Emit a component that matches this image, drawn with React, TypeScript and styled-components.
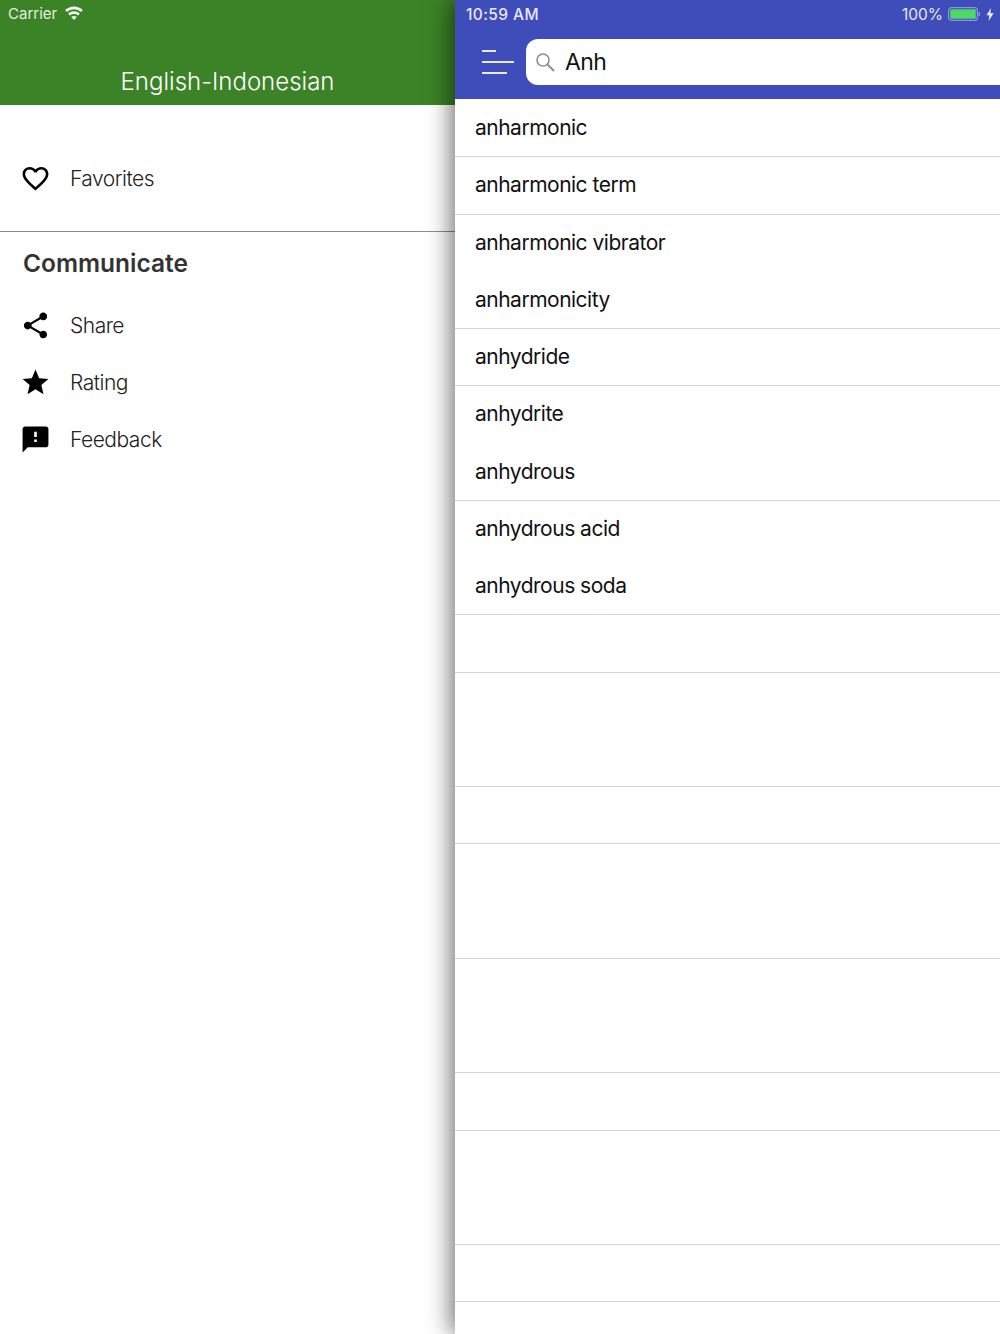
import React from "react"
import styled, { createGlobalStyle } from "styled-components"
import { MdFavoriteBorder, MdFeedback, MdShare, MdStar } from "react-icons/md"

const GlobalStyle = createGlobalStyle`
  html, body {
    margin: 0;
    padding: 0;
    background: #fff;
  }
`

const Screen = styled.div`
  width: 1000px;
  height: 1334px;
  display: flex;
  overflow: hidden;
  font-family: Inter, "Liberation Sans", sans-serif;
`

const Drawer = styled.div`
  width: 455px;
  flex: none;
  display: flex;
  flex-direction: column;
  background: #fff;
`

const DrawerHeader = styled.div`
  height: 105px;
  flex: none;
  background: #3b8326;
  display: flex;
  flex-direction: column;
`

const StatusLeft = styled.div`
  height: 26px;
  padding-left: 8px;
  display: flex;
  align-items: center;
  gap: 8px;
  color: #e4efe0;
  font-size: 15px;
`

const DrawerTitle = styled.div`
  margin-top: 40px;
  text-align: center;
  color: #fff;
  font-size: 24px;
  font-weight: 300;
  line-height: 32px;
`

const FavoritesBlock = styled.div`
  height: 127px;
  flex: none;
  padding-top: 45px;
  box-sizing: border-box;
  border-bottom: 1px solid #8c8c8c;
`

const MenuRow = styled.div`
  height: 57.2px;
  display: flex;
  align-items: center;
  padding-left: 20px;
  gap: 19px;
  color: #222;
  font-size: 21px;
  font-weight: 300;
  letter-spacing: -0.5px;

  svg {
    flex: none;
    width: 31px;
    height: 31px;
    color: #000;
  }
`

const SectionTitle = styled.div`
  padding: 16px 0 0 23px;
  height: 65px;
  box-sizing: border-box;
  color: #333;
  font-size: 24.5px;
  font-weight: 600;
  line-height: 30px;
`

const Main = styled.div`
  flex: 1;
  display: flex;
  flex-direction: column;
  background: #fff;
  position: relative;
  box-shadow: -4px 0 22px rgba(0, 0, 0, 0.55);
`

const TopBar = styled.div`
  height: 99px;
  flex: none;
  background: #3f4dbb;
  display: flex;
  flex-direction: column;
`

const StatusBar = styled.div`
  height: 28px;
  padding: 0 6px 0 11px;
  display: flex;
  align-items: center;
  justify-content: space-between;
  color: #e6e8f6;
  font-size: 15.5px;
`

const StatusRight = styled.div`
  display: flex;
  align-items: center;
  gap: 5px;
`

const Time = styled.span`
  font-weight: 500;
  letter-spacing: 0.4px;
`

const SearchRow = styled.div`
  display: flex;
  align-items: flex-start;
  margin-top: 11px;
  padding-left: 27px;
  gap: 12px;
`

const Burger = styled.div`
  width: 32px;
  height: 46px;
  flex: none;
  display: flex;
  flex-direction: column;
  justify-content: center;
  gap: 9px;
`

const BurgerLine = styled.span<{ $w: number }>`
  display: block;
  height: 2px;
  width: ${({ $w }) => $w}px;
  background: #e8eaf8;
`

const SearchBox = styled.div`
  flex: 1;
  height: 46px;
  background: #fff;
  border-radius: 12px 0 0 12px;
  display: flex;
  align-items: center;
  padding-left: 9px;
  gap: 10px;
  color: #111;
  font-size: 23px;
  letter-spacing: -0.6px;
`

const List = styled.div`
  flex: 1;
  display: flex;
  flex-direction: column;
  padding-top: 1px;
`

const Row = styled.div<{ $line: boolean }>`
  height: 57.25px;
  flex: none;
  box-sizing: border-box;
  padding: 0 0 1px 20px;
  display: flex;
  align-items: center;
  color: #111;
  font-size: 21px;
  letter-spacing: -0.5px;
  border-bottom: ${({ $line }) => ($line ? "1px solid #d4d4d6" : "1px solid transparent")};
`

const words: [string, boolean][] = [
  ["anharmonic", true],
  ["anharmonic term", true],
  ["anharmonic vibrator", false],
  ["anharmonicity", true],
  ["anhydride", true],
  ["anhydrite", false],
  ["anhydrous", true],
  ["anhydrous acid", false],
  ["anhydrous soda", true],
  ["", true],
  ["", false],
  ["", true],
  ["", true],
  ["", false],
  ["", true],
  ["", false],
  ["", true],
  ["", true],
  ["", false],
  ["", true],
  ["", true],
]

const WifiIcon = () => (
  <svg width="18" height="14" viewBox="0 0 18 14" fill="none" stroke="#f1f6ee" strokeWidth="2.7">
    <path d="M1 5 C5.5 0.8 12.5 0.8 17 5" />
    <path d="M4 8.4 C6.8 6 11.2 6 14 8.4" />
    <path d="M9 14 L6.2 11 C8 9.8 10 9.8 11.8 11 Z" fill="#f1f6ee" stroke="none" />
  </svg>
)

const SearchIcon = () => (
  <svg width="20" height="20" viewBox="0 0 20 20" fill="none" stroke="#8e8e93" strokeWidth="1.6">
    <circle cx="8" cy="8" r="6" />
    <path d="M12.5 12.5 L19 19" strokeWidth="2" />
  </svg>
)

const BatteryIcon = () => (
  <svg width="33" height="14" viewBox="0 0 33 14">
    <rect x="0.6" y="0.6" width="28.8" height="12.8" rx="3" fill="none" stroke="#8b95dc" strokeWidth="1.2" />
    <rect x="2.2" y="2.2" width="25.6" height="9.6" rx="1.4" fill="#4cd964" />
    <rect x="30.4" y="5" width="1.6" height="4" rx="0.8" fill="#8b95dc" />
  </svg>
)

const BoltIcon = () => (
  <svg width="8" height="13" viewBox="0 0 8 13" fill="#eef0fa">
    <path d="M5 0 L0.5 7.2 H3.4 L2.6 13 L7.6 5.2 H4.4 Z" />
  </svg>
)

export default function App() {
  return (
    <Screen>
      <GlobalStyle />
      <Drawer>
        <DrawerHeader>
          <StatusLeft>
            Carrier
            <WifiIcon />
          </StatusLeft>
          <DrawerTitle>English-Indonesian</DrawerTitle>
        </DrawerHeader>
        <FavoritesBlock>
          <MenuRow>
            <MdFavoriteBorder />
            Favorites
          </MenuRow>
        </FavoritesBlock>
        <SectionTitle>Communicate</SectionTitle>
        <MenuRow>
          <MdShare />
          Share
        </MenuRow>
        <MenuRow>
          <MdStar />
          Rating
        </MenuRow>
        <MenuRow>
          <MdFeedback />
          Feedback
        </MenuRow>
      </Drawer>
      <Main>
        <TopBar>
          <StatusBar>
            <Time>10:59 AM</Time>
            <StatusRight>
              100%
              <BatteryIcon />
              <BoltIcon />
            </StatusRight>
          </StatusBar>
          <SearchRow>
            <Burger>
              <BurgerLine $w={14} />
              <BurgerLine $w={32} />
              <BurgerLine $w={25} />
            </Burger>
            <SearchBox>
              <SearchIcon />
              Anh
            </SearchBox>
          </SearchRow>
        </TopBar>
        <List>
          {words.map(([word, line], i) => (
            <Row key={i} $line={line}>
              {word}
            </Row>
          ))}
        </List>
      </Main>
    </Screen>
  )
}
